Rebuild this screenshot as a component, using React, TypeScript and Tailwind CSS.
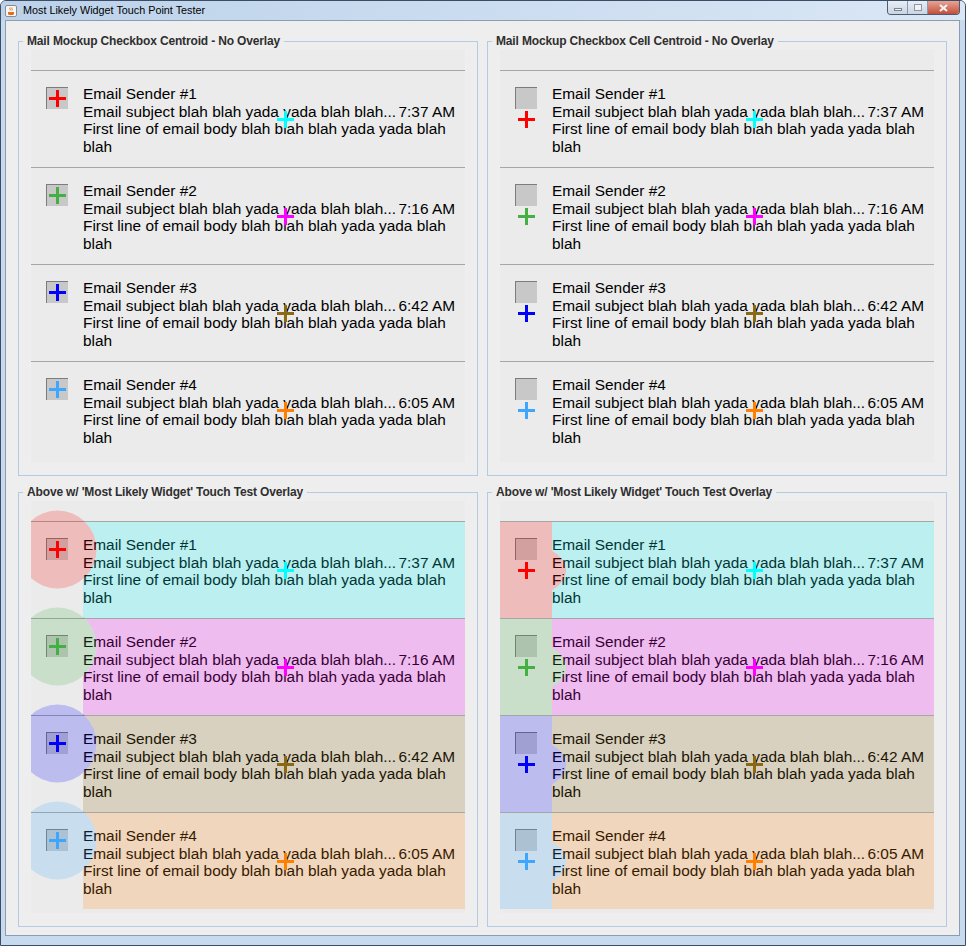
import React from 'react';

const rows = [
  { n: 1, time: '7:37 AM' },
  { n: 2, time: '7:16 AM' },
  { n: 3, time: '6:42 AM' },
  { n: 4, time: '6:05 AM' },
];

// colors for the checkbox touch point and the text touch point, per row
const cbColors = ['#ff0000', '#44b044', '#0000ff', '#3ea6fc'];
const textColors = ['#00ffff', '#ff00ff', '#8b6914', '#ff8000'];

type Mode = 'box' | 'cell';

const Cross = ({ x, y, color }: { x: number; y: number; color: string }) => (
  <path
    d={`M${x - 8.5} ${y}h17M${x} ${y - 8.5}v17`}
    stroke={color}
    strokeWidth={3}
    fill="none"
    shapeRendering="crispEdges"
  />
);

const Overlay = ({ mode, touch }: { mode: Mode; touch: boolean }) => (
  <svg className="absolute inset-0 pointer-events-none" width={434} height={412}>
    {touch &&
      rows.map((r, i) => {
        const top = 21 + 97 * i;
        const bot = 117 + 97 * i;
        if (mode === 'box') {
          const cy = 48.5 + 97 * i;
          const dy = Math.sqrt(39 * 39 - 25.5 * 25.5);
          return (
            <g key={r.n}>
              <path
                d={`M52 ${top}H434V${bot}H52V${cy + dy}A39 39 0 0 0 52 ${cy - dy}Z`}
                fill={textColors[i]}
                fillOpacity={0.2}
              />
              <circle cx={26.5} cy={cy} r={39} fill={cbColors[i]} fillOpacity={0.2} />
            </g>
          );
        }
        const cy = 69.5 + 97 * i;
        const dy = 26 * Math.sqrt(1 - (26 / 40) * (26 / 40));
        return (
          <g key={r.n}>
            <path
              d={`M52 ${top}H434V${bot}H52V${cy + dy}A40 26 0 0 0 52 ${cy - dy}Z`}
              fill={textColors[i]}
              fillOpacity={0.2}
            />
            <path
              d={`M0 ${top}H52V${cy - dy}A40 26 0 0 1 52 ${cy + dy}V${bot}H0Z`}
              fill={cbColors[i]}
              fillOpacity={0.2}
            />
          </g>
        );
      })}
    {rows.map((r, i) => (
      <g key={r.n}>
        <Cross x={26.5} y={(mode === 'box' ? 48.5 : 69.5) + 97 * i} color={cbColors[i]} />
        <Cross x={254.5} y={69.5 + 97 * i} color={textColors[i]} />
      </g>
    ))}
  </svg>
);

const MailRow = ({ n, time }: { n: number; time: string }) => (
  <div className="flex h-[97px] border-t border-[#a6a6a6]">
    <div className="w-[52px] shrink-0 pt-[16px] pl-[15px]">
      <div className="w-[22px] h-[22px] bg-[#c8c8c8] border-l border-t border-[#7c7c7c]" />
    </div>
    <div className="flex-1 min-w-0 pt-[14px] pr-[10px] text-[15.4px] leading-[17.7px] text-black">
      <div className="whitespace-nowrap">Email Sender #{n}</div>
      <div className="flex justify-between whitespace-nowrap">
        <span className="min-w-0 overflow-hidden">Email subject blah blah yada yada blah blah...</span>
        <span className="shrink-0">{time}</span>
      </div>
      <div>First line of email body blah blah blah yada yada blah blah</div>
    </div>
  </div>
);

const Panel = ({ title, mode, touch }: { title: string; mode: Mode; touch: boolean }) => (
  <fieldset className="m-0 p-0 min-w-0 h-[442px] border border-[#b3cbe4]">
    <legend className="ml-[4px] px-[4px] text-[12px] leading-[14px] font-bold tracking-[-0.15px] text-[#2f2f2f]">
      {title}
    </legend>
    <div className="px-[12px] pt-[2px]">
      <div className="relative h-[412px] w-[434px] bg-[#ebebeb] overflow-hidden">
        <div className="h-[20px]" />
        {rows.map((r) => (
          <MailRow key={r.n} n={r.n} time={r.time} />
        ))}
        <Overlay mode={mode} touch={touch} />
      </div>
    </div>
  </fieldset>
);

const App = () => {
  return (
    <div className="w-[966px] h-[946px] flex flex-col overflow-hidden rounded-t-[6px] border border-[#3b4d64] bg-[#c8daee] font-['Liberation_Sans',Arial,sans-serif]">
      {/* Title bar */}
      <div className="h-[19px] shrink-0 flex bg-gradient-to-r from-[#bcd2ea] to-[#dae7f5]">
        <div className="flex items-center">
          <svg className="ml-[4px]" width={12} height={12} viewBox="0 0 12 12">
            <rect x={0.5} y={0.5} width={11} height={11} rx={1.5} fill="#f6f6f6" stroke="#8c8c8c" />
            <path d="M5 2.5c-1 1 1 1.5 0 3M7 2.5c-1 1 1 1.5 0 3" stroke="#e0701a" fill="none" />
            <path d="M3 7h6v1.5c0 1-1 1.5-2 1.5H5c-1 0-2-.5-2-1.5Z" fill="#e0701a" />
          </svg>
          <span className="ml-[6px] text-[10.8px] text-black leading-none">Most Likely Widget Touch Point Tester</span>
        </div>
        <div className="ml-auto mr-[5px] flex h-[14px] border border-t-0 border-[#4f5c6c] rounded-b-[4px] overflow-hidden">
          <div className="w-[20px] flex items-end justify-center pb-[3px] border-r border-[#8a99ab] bg-gradient-to-b from-[#e8eef6] to-[#c9d5e4]">
            <div className="w-[8px] h-[3px] border border-[#7a8390] bg-[#f2f2f2]" />
          </div>
          <div className="w-[20px] flex items-center justify-center border-r border-[#8a99ab] bg-gradient-to-b from-[#e8eef6] to-[#c9d5e4]">
            <div className="w-[8px] h-[7px] border border-[#8d96a2] bg-[#f2f2f2]" />
          </div>
          <div className="w-[31px] flex items-center justify-center bg-gradient-to-b from-[#e6a496] to-[#c24d3a]">
            <svg width={9} height={8} viewBox="0 0 9 8">
              <path d="M1 1l7 6M8 1L1 7" stroke="#f4f4f4" strokeWidth={2} />
            </svg>
          </div>
        </div>
      </div>

      {/* Window frame + content */}
      <div className="flex-1 flex pl-[4px] pr-[5px] pb-[9px]">
        <div className="flex-1 border border-[#8b9db4] bg-[#eeeeee] pt-[13px] px-[12px] grid grid-cols-[460px_460px] grid-rows-[442px_442px] gap-[9px]">
          <Panel title="Mail Mockup Checkbox Centroid - No Overlay" mode="box" touch={false} />
          <Panel title="Mail Mockup Checkbox Cell Centroid - No Overlay" mode="cell" touch={false} />
          <Panel title="Above w/ 'Most Likely Widget' Touch Test Overlay" mode="box" touch />
          <Panel title="Above w/ 'Most Likely Widget' Touch Test Overlay" mode="cell" touch />
        </div>
      </div>
    </div>
  );
};

export default App;
